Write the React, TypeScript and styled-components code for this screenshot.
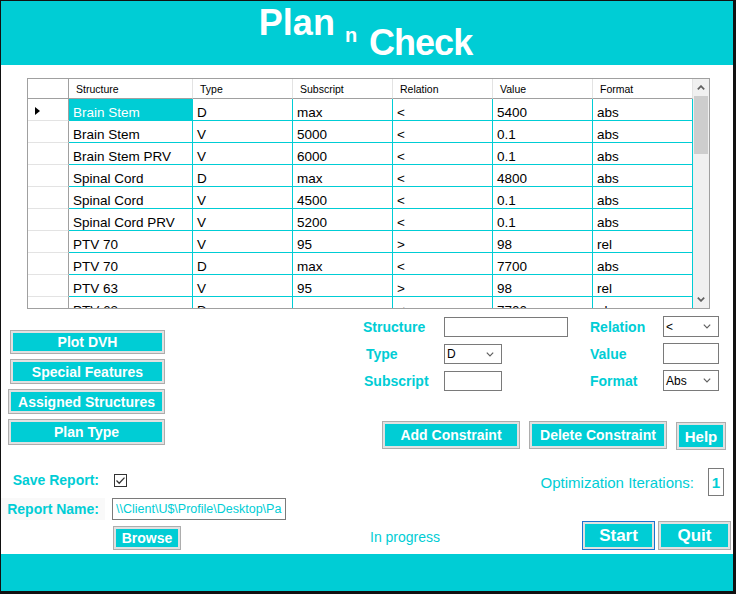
import React from "react";
import styled, { createGlobalStyle } from "styled-components";

const CYAN = "#00cdd5";

const GlobalStyle = createGlobalStyle`
  html, body {
    margin: 0;
    padding: 0;
    background: #fff;
  }
  body {
    font-family: "Liberation Sans", Arial, sans-serif;
  }
  * {
    box-sizing: border-box;
  }
`;

type Constraint = {
  structure: string;
  type: string;
  subscript: string;
  relation: string;
  value: string;
  format: string;
};

const rows: Constraint[] = [
  { structure: "Brain Stem", type: "D", subscript: "max", relation: "<", value: "5400", format: "abs" },
  { structure: "Brain Stem", type: "V", subscript: "5000", relation: "<", value: "0.1", format: "abs" },
  { structure: "Brain Stem PRV", type: "V", subscript: "6000", relation: "<", value: "0.1", format: "abs" },
  { structure: "Spinal Cord", type: "D", subscript: "max", relation: "<", value: "4800", format: "abs" },
  { structure: "Spinal Cord", type: "V", subscript: "4500", relation: "<", value: "0.1", format: "abs" },
  { structure: "Spinal Cord PRV", type: "V", subscript: "5200", relation: "<", value: "0.1", format: "abs" },
  { structure: "PTV 70", type: "V", subscript: "95", relation: ">", value: "98", format: "rel" },
  { structure: "PTV 70", type: "D", subscript: "max", relation: "<", value: "7700", format: "abs" },
  { structure: "PTV 63", type: "V", subscript: "95", relation: ">", value: "98", format: "rel" },
  { structure: "PTV 63", type: "D", subscript: "max", relation: "<", value: "7700", format: "abs" },
];

const columns: { key: keyof Constraint; title: string; width: number }[] = [
  { key: "structure", title: "Structure", width: 124 },
  { key: "type", title: "Type", width: 100 },
  { key: "subscript", title: "Subscript", width: 100 },
  { key: "relation", title: "Relation", width: 100 },
  { key: "value", title: "Value", width: 100 },
  { key: "format", title: "Format", width: 100 },
];

const Chevron = ({ up, size = 8, stroke = "#606060", width = 1.2 }: { up?: boolean; size?: number; stroke?: string; width?: number }) => (
  <svg width={size} height={size * 0.625} viewBox="0 0 8 5">
    <polyline
      points={up ? "0.8,4.3 4,1.1 7.2,4.3" : "0.8,0.7 4,3.9 7.2,0.7"}
      fill="none"
      stroke={stroke}
      strokeWidth={width}
    />
  </svg>
);

const App: React.FC = () => {
  return (
    <>
      <GlobalStyle />
      <Frame>
        <Header>
          <TitleWord $top={4} $size={36}>Plan</TitleWord>
          <TitleWord $top={24} $size={20} $left={10}>n</TitleWord>
          <TitleWord $top={24} $size={36} $left={12} $spacing={-1}>Check</TitleWord>
        </Header>

        <Main>
          <GridBox>
            <Table>
              <HeadRow>
                <RowHeadCell $head />
                {columns.map((c) => (
                  <HeadCell key={c.key} $w={c.width}>{c.title}</HeadCell>
                ))}
              </HeadRow>
              {rows.map((r, i) => (
                <Row key={i}>
                  <RowHeadCell>{i === 0 && <Pointer />}</RowHeadCell>
                  {columns.map((c, j) => (
                    <Cell key={c.key} $w={c.width} $selected={i === 0 && j === 0}>
                      {r[c.key]}
                    </Cell>
                  ))}
                </Row>
              ))}
            </Table>
            <ScrollBar>
              <ScrollArrow><Chevron up width={1.7} /></ScrollArrow>
              <Thumb />
              <ScrollSpacer />
              <ScrollArrow><Chevron width={1.7} /></ScrollArrow>
            </ScrollBar>
          </GridBox>

          <Middle>
            <SideButtons>
              <FaceButton $w={155} $h={24} $left={2}>Plot DVH</FaceButton>
              <FaceButton $w={155} $h={25} $left={2}>Special Features</FaceButton>
              <FaceButton $w={157} $h={25}>Assigned Structures</FaceButton>
              <FaceButton $w={157} $h={26}>Plan Type</FaceButton>
            </SideButtons>

            <Form>
              <FieldRow>
                <FieldGroup $label={81} $rowH={20} $gap={7} $top={1}>
                  <FieldLabel>Structure</FieldLabel>
                  <TextBox $w={124} defaultValue="" />
                  <FieldLabel $indent={3}>Type</FieldLabel>
                  <Combo $w={58}>
                    <span>D</span>
                    <Chevron />
                  </Combo>
                  <FieldLabel $indent={1}>Subscript</FieldLabel>
                  <TextBox $w={58} defaultValue="" />
                </FieldGroup>
                <FieldGroup $label={73} $rowH={21} $gap={6} $left={22}>
                  <FieldLabel>Relation</FieldLabel>
                  <Combo $w={56}>
                    <span>&lt;</span>
                    <Chevron />
                  </Combo>
                  <FieldLabel>Value</FieldLabel>
                  <TextBox $w={56} defaultValue="" />
                  <FieldLabel>Format</FieldLabel>
                  <Combo $w={56}>
                    <span>Abs</span>
                    <Chevron />
                  </Combo>
                </FieldGroup>
              </FieldRow>
              <Actions>
                <FaceButton $w={138} $h={28}>Add Constraint</FaceButton>
                <FaceButton $w={138} $h={28}>Delete Constraint</FaceButton>
                <FaceButton $w={50} $h={28} $down={1} $size={15}>Help</FaceButton>
              </Actions>
            </Form>
          </Middle>

          <Bottom>
            <ReportGrid>
              <FieldLabel $right>Save Report:</FieldLabel>
              <CheckBox>
                <svg width="11" height="11" viewBox="0 0 11 11">
                  <polyline points="1.5,5.5 4.2,8.2 9.5,2.6" fill="none" stroke="#333" strokeWidth="1.3" />
                </svg>
              </CheckBox>
              <FieldLabel $right $shaded>Report Name:</FieldLabel>
              <PathBox defaultValue={"\\\\Client\\U$\\Profile\\Desktop\\Pa"} />
              <span />
              <FaceButton $w={68} $h={24} $left={1}>Browse</FaceButton>
            </ReportGrid>

            <Status>In progress</Status>

            <RunPanel>
              <IterRow>
                <IterText>Optimization Iterations:</IterText>
                <IterBox>1</IterBox>
              </IterRow>
              <RunButtons>
                <FaceButton $w={73} $h={29} $size={17} $focus>Start</FaceButton>
                <FaceButton $w={73} $h={29} $size={17}>Quit</FaceButton>
              </RunButtons>
            </RunPanel>
          </Bottom>
        </Main>

        <Footer />
      </Frame>
    </>
  );
};

export default App;

const Frame = styled.div`
  width: 736px;
  height: 594px;
  border-style: solid;
  border-color: #111;
  border-width: 1px 3px 3px 1px;
  display: flex;
  flex-direction: column;
  background: #fff;
  overflow: hidden;
`;

const Header = styled.header`
  height: 64px;
  flex-shrink: 0;
  background: ${CYAN};
  display: flex;
  justify-content: center;
  align-items: flex-start;
  padding-right: 3px;
  color: #fff;
  font-family: "Liberation Sans", Arial, sans-serif;
  font-weight: bold;
`;

const TitleWord = styled.span<{ $top: number; $size: number; $left?: number; $spacing?: number }>`
  margin-top: ${(p) => p.$top}px;
  margin-left: ${(p) => p.$left ?? 0}px;
  font-size: ${(p) => p.$size}px;
  letter-spacing: ${(p) => p.$spacing ?? 0}px;
  line-height: 1;
`;

const Main = styled.main`
  flex: 1;
  display: flex;
  flex-direction: column;
`;

const GridBox = styled.div`
  margin: 13px 0 0 26px;
  width: 683px;
  height: 231px;
  border: 1px solid #a0a0a0;
  display: flex;
  overflow: hidden;
  flex-shrink: 0;
`;

const Table = styled.div`
  display: flex;
  flex-direction: column;
  width: 665px;
`;

const HeadRow = styled.div`
  display: flex;
  height: 20px;
  flex-shrink: 0;
`;

const HeadCell = styled.div<{ $w: number }>`
  width: ${(p) => p.$w}px;
  height: 20px;
  border-right: 1px solid #e3e3e3;
  border-bottom: 1px solid #a0a0a0;
  padding: 4px 0 0 7px;
  font-size: 10.5px;
  line-height: 13px;
  color: #000;
  white-space: nowrap;
`;

const Row = styled.div`
  display: flex;
  height: 22px;
  flex-shrink: 0;
`;

const RowHeadCell = styled.div<{ $head?: boolean }>`
  width: 41px;
  height: ${(p) => (p.$head ? 20 : 22)}px;
  border-right: 1px solid #a0a0a0;
  border-bottom: 1px solid ${(p) => (p.$head ? "#a0a0a0" : "#e3e3e3")};
  display: flex;
  align-items: center;
  padding: 3px 0 0 7px;
`;

const Pointer = styled.span`
  width: 0;
  height: 0;
  border-top: 4.5px solid transparent;
  border-bottom: 4.5px solid transparent;
  border-left: 5px solid #000;
`;

const Cell = styled.div<{ $w: number; $selected?: boolean }>`
  width: ${(p) => p.$w}px;
  height: 22px;
  border-right: 1px solid ${CYAN};
  border-bottom: 1px solid ${CYAN};
  background: ${(p) => (p.$selected ? CYAN : "#fff")};
  color: ${(p) => (p.$selected ? "#fff" : "#000")};
  padding: 5px 0 0 4px;
  font-size: 13.5px;
  line-height: 17px;
  white-space: nowrap;
  overflow: hidden;
`;

const ScrollBar = styled.div`
  width: 16px;
  background: #f0f0f0;
  display: flex;
  flex-direction: column;
`;

const ScrollArrow = styled.div`
  height: 17px;
  display: flex;
  align-items: center;
  justify-content: center;
`;

const Thumb = styled.div`
  height: 58px;
  margin: 0 1px;
  background: #cdcdcd;
`;

const ScrollSpacer = styled.div`
  flex: 1;
`;

const Middle = styled.section`
  display: flex;
  margin-top: 7px;
  height: 134px;
  flex-shrink: 0;
`;

const SideButtons = styled.div`
  margin-left: 7px;
  padding-top: 14px;
  width: 157px;
  display: flex;
  flex-direction: column;
  gap: 5px;
`;

const FaceButton = styled.button<{
  $w: number;
  $h: number;
  $left?: number;
  $down?: number;
  $size?: number;
  $focus?: boolean;
}>`
  width: ${(p) => p.$w}px;
  height: ${(p) => p.$h}px;
  margin: ${(p) => p.$down ?? 0}px 0 0 ${(p) => p.$left ?? 0}px;
  flex-shrink: 0;
  padding: 0;
  border: 1px solid ${(p) => (p.$focus ? "#1a74d0" : "#adadad")};
  box-shadow: inset 0 0 0 2px #e1e1e1;
  background: ${CYAN};
  color: #fff;
  font-family: "Liberation Sans", Arial, sans-serif;
  font-weight: bold;
  font-size: ${(p) => p.$size ?? 14}px;
  line-height: 1;
  white-space: nowrap;
  cursor: pointer;
`;

const Form = styled.div`
  margin-left: 198px;
  display: flex;
  flex-direction: column;
`;

const FieldRow = styled.div`
  display: flex;
  align-items: flex-start;
`;

const FieldGroup = styled.div<{ $label: number; $rowH: number; $gap: number; $top?: number; $left?: number }>`
  display: grid;
  grid-template-columns: ${(p) => p.$label}px auto;
  grid-auto-rows: ${(p) => p.$rowH}px;
  row-gap: ${(p) => p.$gap}px;
  align-items: center;
  margin: ${(p) => p.$top ?? 0}px 0 0 ${(p) => p.$left ?? 0}px;
`;

const FieldLabel = styled.span<{ $indent?: number; $right?: boolean; $shaded?: boolean }>`
  padding-left: ${(p) => p.$indent ?? 0}px;
  padding-right: ${(p) => (p.$right ? 6 : 0)}px;
  text-align: ${(p) => (p.$right ? "right" : "left")};
  color: ${CYAN};
  font-weight: bold;
  font-size: 14px;
  line-height: 16px;
  white-space: nowrap;
  align-self: stretch;
  display: flex;
  align-items: center;
  justify-content: ${(p) => (p.$right ? "flex-end" : "flex-start")};
  background: ${(p) => (p.$shaded ? "#f9f9f9" : "transparent")};
`;

const TextBox = styled.input<{ $w: number }>`
  width: ${(p) => p.$w}px;
  height: 100%;
  border: 1px solid #7a7a7a;
  padding: 0 2px;
  outline: none;
  background: #fff;
  font-family: "Liberation Sans", Arial, sans-serif;
  font-size: 12px;
`;

const Combo = styled.div<{ $w: number }>`
  width: ${(p) => p.$w}px;
  height: 100%;
  border: 1px solid #7a7a7a;
  background: #fff;
  display: flex;
  align-items: center;
  justify-content: space-between;
  padding: 0 7px 0 2px;
  font-size: 12px;
  color: #000;
`;

const Actions = styled.div`
  display: flex;
  align-items: flex-start;
  gap: 9px;
  margin: 30px 0 0 19px;
`;

const Bottom = styled.section`
  display: flex;
  margin-top: 18px;
  height: 82px;
  flex-shrink: 0;
`;

const ReportGrid = styled.div`
  width: 286px;
  display: grid;
  grid-template-columns: 104px 174px;
  grid-template-rows: 24px 22px 24px;
  column-gap: 7px;
  row-gap: 6px;
  align-items: center;
`;

const CheckBox = styled.span`
  width: 13px;
  height: 13px;
  margin-left: 2px;
  border: 1px solid #333;
  background: #fff;
  display: flex;
  align-items: center;
  justify-content: center;
`;

const PathBox = styled.input`
  width: 174px;
  height: 22px;
  border: 1px solid #7a7a7a;
  padding: 0 3px;
  outline: none;
  background: #fff;
  color: ${CYAN};
  font-family: "Liberation Sans", Arial, sans-serif;
  font-size: 12.5px;
`;

const Status = styled.span`
  margin-left: 83px;
  align-self: flex-end;
  padding-bottom: 5px;
  color: ${CYAN};
  font-size: 14px;
  line-height: 16px;
`;

const RunPanel = styled.div`
  margin-left: auto;
  padding-right: 2px;
  display: flex;
  flex-direction: column;
  align-items: flex-end;
  justify-content: space-between;
`;

const IterRow = styled.div`
  display: flex;
  align-items: center;
  gap: 14px;
  margin-right: 7px;
`;

const IterText = styled.span`
  color: ${CYAN};
  font-size: 15px;
`;

const IterBox = styled.span`
  width: 16px;
  height: 28px;
  border: 1px solid #7a7a7a;
  display: flex;
  align-items: center;
  justify-content: center;
  color: ${CYAN};
  font-weight: bold;
  font-size: 15px;
`;

const RunButtons = styled.div`
  display: flex;
  gap: 3px;
`;

const Footer = styled.footer`
  height: 37px;
  flex-shrink: 0;
  margin-top: auto;
  background: ${CYAN};
`;
